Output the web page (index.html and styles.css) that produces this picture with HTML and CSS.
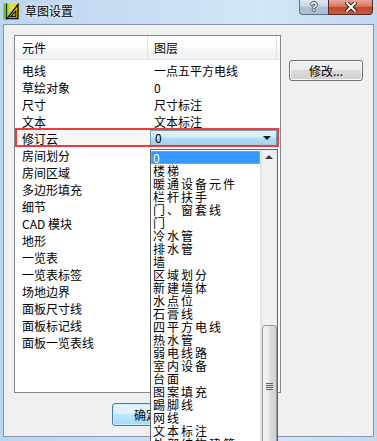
FILE: index.html
```html
<!DOCTYPE html>
<html lang="zh">
<head>
<meta charset="utf-8">
<title>草图设置</title>
<link rel="stylesheet" href="styles.css">
</head>
<body>
<div class="window">
  <div class="titlebar">
    <svg class="app-icon" width="17" height="17" viewBox="0 0 17 17">
      <defs>
        <linearGradient id="ig" x1="0" y1="0" x2="1" y2="0">
          <stop offset="0" stop-color="#5fb33a"/>
          <stop offset="0.45" stop-color="#d8e24a"/>
          <stop offset="1" stop-color="#f7d21e"/>
        </linearGradient>
      </defs>
      <rect x="0.5" y="0.5" width="16" height="16" fill="url(#ig)"/>
      <path d="M3.5 0.5 V16.5" stroke="#1c3a10" stroke-width="1.2"/>
      <path d="M15 1.5 V15.5 H4 Z" fill="none" stroke="#111" stroke-width="1.4"/>
      <path d="M12.8 8 V13.3 H7.8 Z" fill="#f2c40f" stroke="#111" stroke-width="1.2"/>
    </svg>
    <span class="title">草图设置</span>
    <div class="caption-buttons">
      <div class="cap-btn help">?</div>
      <div class="cap-btn close">
        <svg width="12" height="10" viewBox="0 0 12 10">
          <path d="M2 1 L10 9 M10 1 L2 9" stroke="#3b1a14" stroke-width="4" stroke-linecap="square"/>
          <path d="M2 1 L10 9 M10 1 L2 9" stroke="#fff" stroke-width="2" stroke-linecap="square"/>
        </svg>
      </div>
    </div>
  </div>

  <div class="client">
    <div class="main">
      <div class="listview">
        <div class="lv-header">
          <div class="hcell c1">元件</div>
          <div class="hcell c2">图层</div>
        </div>
        <div class="lv-body">
          <div class="row"><div class="cell c1">电线</div><div class="cell c2">一点五平方电线</div></div>
          <div class="row"><div class="cell c1">草绘对象</div><div class="cell c2">0</div></div>
          <div class="row"><div class="cell c1">尺寸</div><div class="cell c2">尺寸标注</div></div>
          <div class="row"><div class="cell c1">文本</div><div class="cell c2">文本标注</div></div>
          <div class="row marked">
            <div class="cell c1">修订云</div>
            <div class="cell c2">
              <div class="combo">
                <span class="combo-value">0</span>
                <span class="combo-arrow"></span>
                <div class="dropdown">
                  <ul class="dd-items">
                    <li class="selected">0</li>
                    <li>楼梯</li>
                    <li>暖通设备元件</li>
                    <li>栏杆扶手</li>
                    <li>门、窗套线</li>
                    <li>门</li>
                    <li>冷水管</li>
                    <li>排水管</li>
                    <li>墙</li>
                    <li>区域划分</li>
                    <li>新建墙体</li>
                    <li>水点位</li>
                    <li>石膏线</li>
                    <li>四平方电线</li>
                    <li>热水管</li>
                    <li>弱电线路</li>
                    <li>室内设备</li>
                    <li>台面</li>
                    <li>图案填充</li>
                    <li>踢脚线</li>
                    <li>网线</li>
                    <li>文本标注</li>
                    <li>外部结构建筑</li>
                  </ul>
                  <div class="scrollbar">
                    <div class="sb-up"><span class="sb-arrow"></span></div>
                    <div class="sb-thumb"><span class="sb-grip"></span></div>
                  </div>
                </div>
              </div>
            </div>
          </div>
          <div class="row"><div class="cell c1">房间划分</div><div class="cell c2"></div></div>
          <div class="row"><div class="cell c1">房间区域</div><div class="cell c2"></div></div>
          <div class="row"><div class="cell c1">多边形填充</div><div class="cell c2"></div></div>
          <div class="row"><div class="cell c1">细节</div><div class="cell c2"></div></div>
          <div class="row"><div class="cell c1">CAD 模块</div><div class="cell c2"></div></div>
          <div class="row"><div class="cell c1">地形</div><div class="cell c2"></div></div>
          <div class="row"><div class="cell c1">一览表</div><div class="cell c2"></div></div>
          <div class="row"><div class="cell c1">一览表标签</div><div class="cell c2"></div></div>
          <div class="row"><div class="cell c1">场地边界</div><div class="cell c2"></div></div>
          <div class="row"><div class="cell c1">面板尺寸线</div><div class="cell c2"></div></div>
          <div class="row"><div class="cell c1">面板标记线</div><div class="cell c2"></div></div>
          <div class="row"><div class="cell c1">面板一览表线</div><div class="cell c2"></div></div>
        </div>
      </div>
      <div class="side">
        <button class="btn modify">修改...</button>
      </div>
    </div>
    <div class="footer">
      <button class="btn default ok">确定</button>
    </div>
  </div>
</div>
</body>
</html>
```
FILE: styles.css
```css
* { box-sizing: border-box; }

html, body {
  margin: 0;
  padding: 0;
}

body {
  font-family: "Noto Sans CJK SC", "Liberation Sans", sans-serif;
  font-size: 12px;
  color: #000;
  background: #bcd4ee;
}

.window {
  width: 377px;
  height: 441px;
  display: flex;
  flex-direction: column;
  overflow: hidden;
  background: linear-gradient(to right, #bcd5ef 0%, #c9def4 40%, #d3e6f8 70%, #c2d8f0 100%);
}

/* ---------- title bar ---------- */
.titlebar {
  height: 24px;
  flex: none;
  display: flex;
  align-items: flex-start;
}

.app-icon {
  margin: 3px 0 0 3px;
  flex: none;
}

.title {
  margin: 2px 0 0 5px;
  line-height: 17px;
  font-size: 12px;
  color: #000;
  text-shadow: 0 0 4px #e8f3ff, 0 0 6px #e8f3ff;
}

.caption-buttons {
  margin-left: auto;
  margin-right: 4px;
  display: flex;
}

.cap-btn {
  height: 15px;
  display: flex;
  align-items: center;
  justify-content: center;
  border: 1px solid #5f7189;
  border-top: none;
}

.help {
  width: 29px;
  border-radius: 0 0 0 4px;
  border-right: none;
  background: linear-gradient(#dde7f2, #c8d6e6 45%, #b1c3d8 50%, #a9bdd4);
  color: #fff;
  font-family: "Liberation Sans", sans-serif;
  font-weight: bold;
  font-size: 12px;
  line-height: 14px;
  text-shadow: 1px 0 0 #3d4a5c, -1px 0 0 #3d4a5c, 0 1px 0 #3d4a5c, 0 -1px 0 #3d4a5c;
}

.close {
  width: 45px;
  border-color: #5a2b25;
  border-radius: 0 0 4px 0;
  background: linear-gradient(#e6a797, #d77a65 45%, #c5452e 52%, #c75a43);
}

/* ---------- client ---------- */
.client {
  flex: 1;
  margin: 0 3px 4px 3px;
  border: 1px solid #8797ab;
  background: #f0f0f0;
  padding: 10px 0 0 10px;
  display: flex;
  flex-direction: column;
}

.main {
  display: flex;
  align-items: flex-start;
  gap: 8px;
}

/* ---------- list view ---------- */
.listview {
  width: 267px;
  height: 358px;
  border: 1px solid #828790;
  background: #fff;
}

.lv-header {
  display: flex;
  height: 24px;
  background: linear-gradient(#ffffff, #ffffff 45%, #f6f7f8 55%, #f2f3f5);
  border-bottom: 1px solid #e2e3e6;
}

.hcell {
  line-height: 24px;
  border-right: 1px solid #e3e4e7;
}

.hcell.c1 { width: 133px; padding-left: 7px; }
.hcell.c2 { width: 129px; padding-left: 6px; }

.lv-body {
  padding-top: 2px;
}

.row {
  display: flex;
  height: 17px;
  line-height: 17px;
}

.cell { white-space: nowrap; }
.cell.c1 { width: 133px; padding-left: 7px; }
.cell.c2 { width: 129px; padding-left: 6px; }

.row.marked {
  position: relative;
  background: #f7f7f7;
}

.row.marked::after {
  content: "";
  position: absolute;
  left: 0;
  right: 1px;
  top: -2px;
  bottom: 0;
  border: 2px solid #f23a3a;
  pointer-events: none;
}

.row.marked .cell.c2 {
  padding-left: 2px;
}

/* ---------- combo box ---------- */
.combo {
  position: relative;
  width: 127px;
  height: 16px;
  border: 1px solid #6f9fc8;
  background: linear-gradient(#e6f4fc, #d0ebfa 45%, #b5def6 50%, #9fd2f0);
  display: flex;
  align-items: center;
  line-height: 14px;
}

.combo-value {
  padding-left: 4px;
  flex: 1;
}

.combo-arrow {
  width: 0;
  height: 0;
  margin-right: 5px;
  border-left: 4px solid transparent;
  border-right: 4px solid transparent;
  border-top: 4px solid #111;
}

/* ---------- drop-down list ---------- */
.dropdown {
  position: absolute;
  z-index: 10;
  left: -1px;
  top: 18px;
  width: 128px;
  height: 300px;
  border: 1px solid #646464;
  background: #fff;
  display: flex;
  padding-top: 1px;
}

.dd-items {
  list-style: none;
  margin: 0;
  padding: 0;
  flex: 1;
}

.dd-items li {
  height: 13px;
  line-height: 13px;
  padding-left: 2px;
  letter-spacing: 2px;
  white-space: nowrap;
  font-size: 12px;
}

.dd-items li.selected {
  background: #3399ff;
  color: #fff;
  outline: 1px dotted #f7a233;
  outline-offset: -1px;
}

.scrollbar {
  width: 17px;
  flex: none;
  margin-top: -1px;
  background: linear-gradient(to right, #e6e6e6, #f2f2f2 20%, #f0f0f0 80%, #e9e9e9);
  border-left: 1px solid #e3e3e3;
  display: flex;
  flex-direction: column;
}

.sb-up {
  height: 17px;
  display: flex;
  align-items: center;
  justify-content: center;
}

.sb-arrow {
  width: 0;
  height: 0;
  border-left: 4px solid transparent;
  border-right: 4px solid transparent;
  border-bottom: 4px solid #3a3a3a;
}

.sb-thumb {
  margin: 162px 0 0 1px;
  width: 15px;
  height: 154px;
  border: 1px solid #979797;
  border-radius: 3px;
  background: linear-gradient(to right, #f4f4f4, #ebebeb 45%, #dcdcdc 55%, #d2d2d2);
  display: flex;
  align-items: center;
  justify-content: center;
}

.sb-grip {
  width: 7px;
  height: 7px;
  background: repeating-linear-gradient(#5c5c5c 0 1px, transparent 1px 2px);
}

/* ---------- buttons ---------- */
.side {
  padding-top: 25px;
}

.btn {
  font-family: "Noto Sans CJK SC", "Liberation Sans", sans-serif;
  font-size: 12px;
  color: #000;
  padding: 0;
  border: 1px solid #707070;
  border-radius: 3px;
  background: linear-gradient(#f2f2f2, #ebebeb 45%, #dddddd 50%, #cfcfcf);
  box-shadow: inset 0 0 0 1px #fbfbfb;
  line-height: 18px;
}

.modify {
  width: 74px;
  height: 21px;
}

.footer {
  margin-top: 10px;
  padding-left: 98px;
}

.ok {
  width: 75px;
  height: 23px;
  border-color: #3c7fb1;
  background: linear-gradient(#e8f5fc, #d9f0fc 45%, #bee6fd 50%, #a7d9f5);
  box-shadow: inset 0 0 0 1px #c9ecfc;
  text-align: left;
  padding-left: 21px;
}
```
